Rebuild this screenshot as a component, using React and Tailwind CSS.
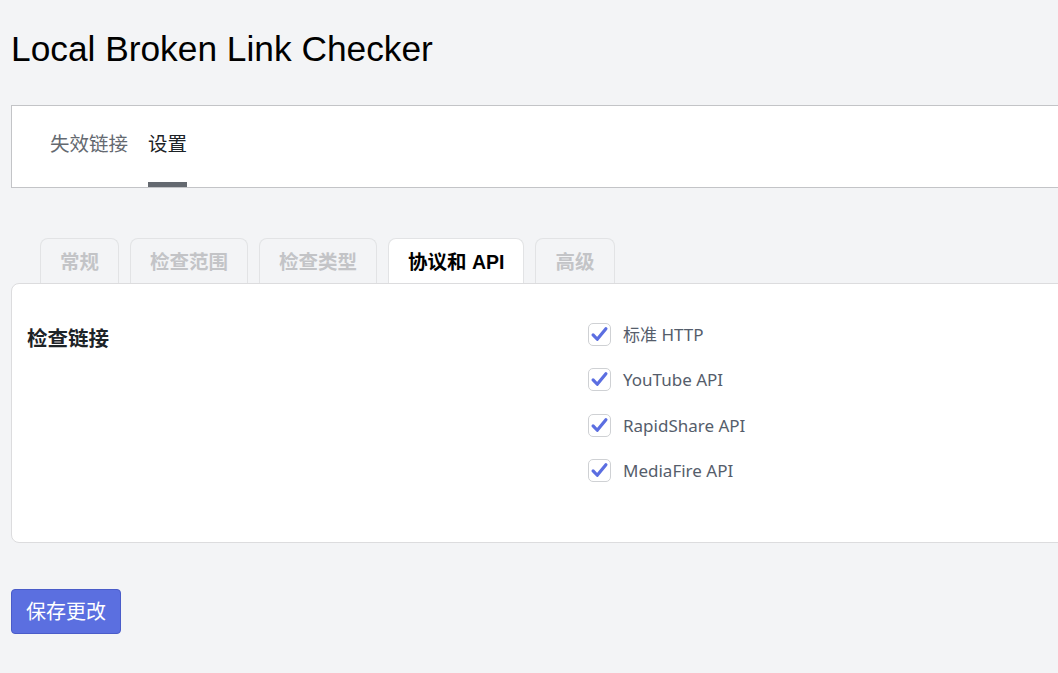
import { useState } from 'react'

const NAV_ITEMS = ['失效链接', '设置']
const TABS = ['常规', '检查范围', '检查类型', '协议和 API', '高级']
const PROTOCOLS = ['标准 HTTP', 'YouTube API', 'RapidShare API', 'MediaFire API']

const CJK = "font-['Liberation_Sans','Noto_Sans_CJK_SC',sans-serif]"
const BODY = "font-['Noto_Sans','Noto_Sans_CJK_SC',sans-serif]"

function CheckBox({ checked, onChange }) {
  return (
    <button
      type="button"
      onClick={onChange}
      className="w-[23px] h-[23px] rounded-[5px] border border-[#cfd1d4] bg-white flex items-center justify-center shrink-0"
    >
      {checked && (
        <svg width="19" height="19" viewBox="0 0 16 16" fill="none">
          <path d="M2.6 8.4l3.5 3.6L13.4 3.2" stroke="#5b6ee1" strokeWidth="2.7" strokeLinecap="round" strokeLinejoin="round" />
        </svg>
      )}
    </button>
  )
}

export default function App() {
  const [nav, setNav] = useState(1)
  const [tab, setTab] = useState(3)
  const [checked, setChecked] = useState(PROTOCOLS.map(() => true))

  const toggle = i => setChecked(c => c.map((v, j) => (j === i ? !v : v)))

  return (
    <div className="min-h-screen overflow-hidden bg-[#f3f4f6] px-[11px] pt-[28px]">
      <h1 className="font-['Liberation_Sans',sans-serif] text-[35.3px] leading-[42px] text-black">
        Local Broken Link Checker
      </h1>

      {/* Top navigation */}
      <div className="mt-[35px] w-[1100px] h-[83px] bg-white border border-[#c3c4c7] flex items-stretch gap-[20px] pl-[38px]">
        {NAV_ITEMS.map((item, i) => (
          <button
            key={item}
            onClick={() => setNav(i)}
            className={`relative flex items-center pb-[4px] text-[19.5px] ${CJK} ${nav === i ? 'text-[#1d2327]' : 'text-[#646970]'}`}
          >
            {item}
            {nav === i && <span className="absolute left-0 right-0 bottom-0 h-[5px] bg-[#646970]" />}
          </button>
        ))}
      </div>

      {/* Settings tabs */}
      <div className="mt-[50px] flex items-end gap-[11px] pl-[29px]">
        {TABS.map((t, i) => (
          <button
            key={t}
            onClick={() => setTab(i)}
            className={`h-[45px] px-[19px] pt-[4px] rounded-t-[8px] border border-b-0 border-[#e2e3e5] text-[19.5px] font-bold ${CJK} ${
              tab === i ? 'bg-white text-black' : 'bg-[#f3f4f6] text-[#c3c4c7]'
            }`}
          >
            {t}
          </button>
        ))}
      </div>

      {/* Tab content */}
      <div className="w-[1100px] h-[260px] bg-white border border-[#dcdcde] rounded-[8px] flex pt-[39px] pl-[15px]">
        <div className={`w-[561px] pt-[2px] text-[20.5px] leading-[28px] font-bold text-[#1d2327] ${CJK}`}>检查链接</div>
        <div className="flex flex-col gap-[22.4px]">
          {PROTOCOLS.map((p, i) => (
            <label key={p} className="flex items-center gap-[12px] h-[23px] cursor-pointer">
              <CheckBox checked={checked[i]} onChange={() => toggle(i)} />
              <span className={`text-[17px] text-[#555d6b] ${BODY}`}>{p}</span>
            </label>
          ))}
        </div>
      </div>

      <button className={`mt-[46px] w-[110px] h-[45px] rounded-[4px] bg-[#5b6fe0] border border-[#4a5cc9] text-white text-[20px] ${CJK}`}>
        保存更改
      </button>
    </div>
  )
}
